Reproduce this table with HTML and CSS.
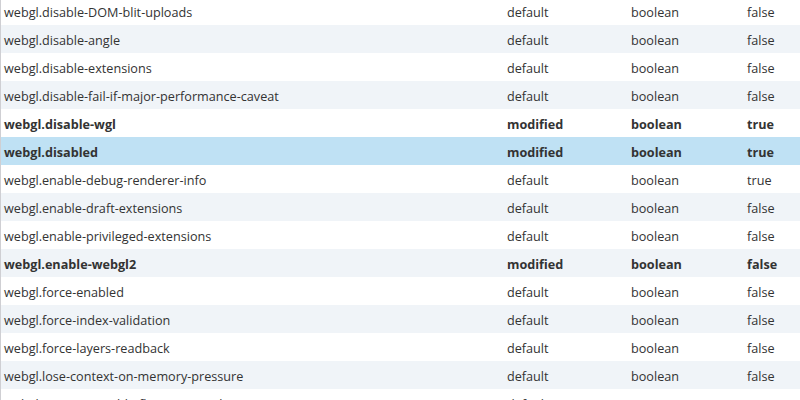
FILE: index.html
```html
<!DOCTYPE html>
<html>
<head>
<meta charset="utf-8">
<link rel="stylesheet" href="styles.css">
</head>
<body>
<div class="prefs">
  <div class="row"><span>webgl.disable-DOM-blit-uploads</span><span>default</span><span>boolean</span><span>false</span></div>
  <div class="row alt"><span>webgl.disable-angle</span><span>default</span><span>boolean</span><span>false</span></div>
  <div class="row"><span>webgl.disable-extensions</span><span>default</span><span>boolean</span><span>false</span></div>
  <div class="row alt"><span>webgl.disable-fail-if-major-performance-caveat</span><span>default</span><span>boolean</span><span>false</span></div>
  <div class="row mod"><span>webgl.disable-wgl</span><span>modified</span><span>boolean</span><span>true</span></div>
  <div class="row mod sel"><span>webgl.disabled</span><span>modified</span><span>boolean</span><span>true</span></div>
  <div class="row"><span>webgl.enable-debug-renderer-info</span><span>default</span><span>boolean</span><span>true</span></div>
  <div class="row alt"><span>webgl.enable-draft-extensions</span><span>default</span><span>boolean</span><span>false</span></div>
  <div class="row"><span>webgl.enable-privileged-extensions</span><span>default</span><span>boolean</span><span>false</span></div>
  <div class="row alt mod"><span>webgl.enable-webgl2</span><span>modified</span><span>boolean</span><span>false</span></div>
  <div class="row"><span>webgl.force-enabled</span><span>default</span><span>boolean</span><span>false</span></div>
  <div class="row alt"><span>webgl.force-index-validation</span><span>default</span><span>boolean</span><span>false</span></div>
  <div class="row"><span>webgl.force-layers-readback</span><span>default</span><span>boolean</span><span>false</span></div>
  <div class="row alt"><span>webgl.lose-context-on-memory-pressure</span><span>default</span><span>boolean</span><span>false</span></div>
  <div class="row"><span>webgl.max-acceptable-fb-status-invals</span><span>default</span><span>integer</span><span>0</span></div>
</div>
</body>
</html>
```
FILE: styles.css
```css
html, body {
  margin: 0;
  padding: 0;
  background: #ffffff;
  overflow: hidden;
}
.prefs {
  margin-top: -3px;
  border-left: 1px solid #cfcfd3;
  font-family: "Open Sans", "Noto Sans", sans-serif;
  font-size: 12.65px;
  color: #333333;
}
.row {
  display: grid;
  grid-template-columns: 503px 124px 116px 1fr;
  height: 28px;
  align-items: center;
  background: #ffffff;
}
.row span {
  padding-left: 3px;
  padding-top: 1px;
  white-space: nowrap;
}
.row.alt {
  background: #f0f4f8;
}
.row.mod {
  font-weight: bold;
}
.row.sel {
  background: #bfe1f4;
}
```
